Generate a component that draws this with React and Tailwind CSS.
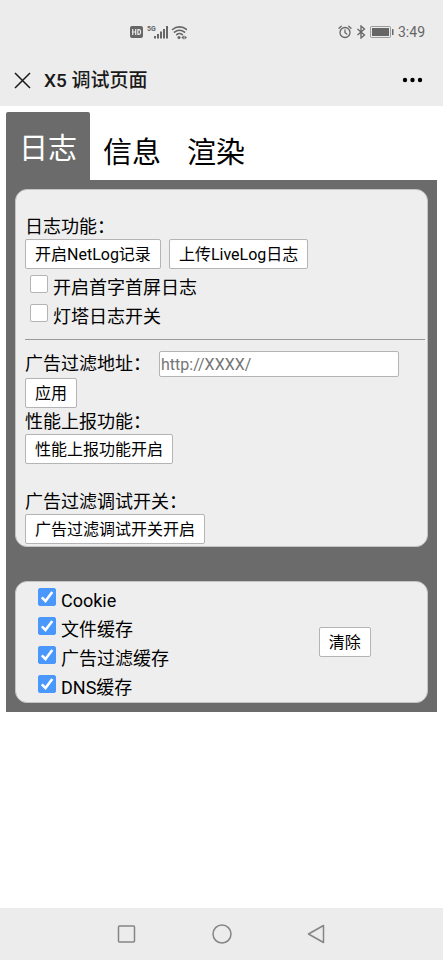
import React, { useState } from 'react';

const tabs = ['日志', '信息', '渲染'];

const logOptions = ['开启首字首屏日志', '灯塔日志开关'];

const cacheOptions = ['Cookie', '文件缓存', '广告过滤缓存', 'DNS缓存'];

const StatusBar = () => (
  <div className="flex items-center justify-between h-[54px] pt-[10px] pl-[129px] pr-[18px] text-[#666666]">
    <svg width="58" height="18" viewBox="0 0 58 18" fill="currentColor">
      <rect x="1" y="3" width="13" height="12" rx="2" />
      <path d="M3.7 6v6M6.7 6v6M3.7 9h3M8.9 6.6v4.8h1a1.6 1.6 0 0 0 1.6-1.6V8.2a1.6 1.6 0 0 0-1.6-1.6z" fill="none" stroke="#ececec" strokeWidth="1.2" />
      <text x="18" y="8" fontSize="7" fontWeight="700" fontFamily="Roboto, sans-serif">5G</text>
      <path d="M25 13h2v2.500h-2zM28 11h2v4.500h-2zM31 8.500h2v7h-2zM34 6h2v9.500h-2zM37 3h2v12.500h-2z" />
      <g fill="none" stroke="currentColor" strokeWidth="1.6" strokeLinecap="round">
        <path d="M43.500 6.500a10.500 10.500 0 0 1 14 0" />
        <path d="M45.500 9.200a7.500 7.500 0 0 1 10 0" />
        <path d="M47.700 11.700a4.300 4.300 0 0 1 5.600 0" />
      </g>
      <circle cx="50" cy="14.500" r="1.500" />
      <path d="M52.300 14.500l2.500-2v4zM58 14.500l-2.500-2v4z" />
    </svg>
    <div className="flex items-center gap-1">
      <svg width="14" height="14" viewBox="0 0 14 14" fill="none" stroke="currentColor" strokeWidth="1.3" strokeLinecap="round">
        <circle cx="7" cy="7.5" r="5" />
        <path d="M7 5v2.700l1.800 1.300M1 3.300l2.300-2M13 3.300l-2.300-2" />
      </svg>
      <svg width="10" height="14" viewBox="0 0 10 14" fill="none" stroke="currentColor" strokeWidth="1.3">
        <path d="M1.500 4l7 6L5 13V1l3.500 3-7 6" />
      </svg>
      <svg width="24" height="12" viewBox="0 0 24 12" fill="currentColor">
        <rect x="0.5" y="0.5" width="20" height="11" rx="1" fill="none" stroke="currentColor" strokeOpacity="0.6" />
        <rect x="2" y="2" width="17" height="8" />
        <rect x="22" y="3" width="1.5" height="6" rx="0.5" />
      </svg>
      <span className="text-sm leading-4">3:49</span>
    </div>
  </div>
);

const TitleBar = () => (
  <div className="flex items-center h-[52px] pl-[14px] pr-5 text-[#1a1a1a]">
    <button aria-label="关闭">
      <svg width="17" height="17" viewBox="0 0 17 17" fill="none" stroke="currentColor" strokeWidth="1.5">
        <path d="M1 1l15 15M16 1L1 16" />
      </svg>
    </button>
    <h1 className="ml-[13px] flex-1 pt-px text-[19px] leading-7 font-medium">X5 调试页面</h1>
    <button aria-label="更多">
      <svg width="22" height="6" viewBox="0 0 22 6" fill="#000">
        <circle cx="4" cy="3" r="2.2" />
        <circle cx="11.5" cy="3" r="2.2" />
        <circle cx="19" cy="3" r="2.2" />
      </svg>
    </button>
  </div>
);

const Button = ({ children }) => (
  <button className="block h-[30px] pt-[2px] px-[9px] bg-white border border-[#b4b4b4] rounded-[2px] text-base leading-[26px] whitespace-nowrap">
    {children}
  </button>
);

const Checkbox = ({ label, defaultChecked = false }) => {
  const [checked, setChecked] = useState(defaultChecked);

  return (
    <label className="flex items-start gap-[5px]">
      <span className="relative block w-[18px] h-[18px]">
        <input
          type="checkbox"
          checked={checked}
          onChange={(e) => setChecked(e.target.checked)}
          className="block appearance-none w-[18px] h-[18px] rounded-[2px] border border-[#b4b4b4] bg-white checked:border-[#4a98fb] checked:bg-[#4a98fb]"
        />
        {checked && (
          <svg className="absolute inset-0 pointer-events-none" width="18" height="18" viewBox="0 0 18 18" fill="none" stroke="#fff" strokeWidth="2.6">
            <path d="M3.800 9.300l3.700 3.700 6.800-9" />
          </svg>
        )}
      </span>
      <span className="pt-px text-lg leading-6">{label}</span>
    </label>
  );
};

const LogCard = () => (
  <section className="bg-[#eeeeee] border border-[#c4c4c4] rounded-xl pt-[23px] pb-[2px] pl-[9px] pr-[2px]">
    <p className="pt-[2px] leading-6">日志功能：</p>
    <div className="flex gap-2">
      <Button>开启NetLog记录</Button>
      <Button>上传LiveLog日志</Button>
    </div>
    <div className="flex flex-col gap-1 pt-[6px] pl-[5px]">
      {logOptions.map((label) => (
        <Checkbox key={label} label={label} />
      ))}
    </div>
    <hr className="mt-[10px] mb-[10px] border-[#9a9a9a]" />
    <div className="flex items-center h-7">
      <label htmlFor="filter-url" className="w-[134px] leading-6">广告过滤地址：</label>
      <input
        id="filter-url"
        type="text"
        placeholder="http://XXXX/"
        className="w-3/5 h-[26px] px-px bg-white border border-[#b4b4b4] rounded-[2px] text-base placeholder:text-[#757575]"
      />
    </div>
    <Button>应用</Button>
    <p className="pt-[2px] leading-6">性能上报功能：</p>
    <Button>性能上报功能开启</Button>
    <p className="mt-6 pt-[2px] leading-6">广告过滤调试开关：</p>
    <Button>广告过滤调试开关开启</Button>
  </section>
);

const CacheCard = () => (
  <section className="flex mt-[34px] bg-[#eeeeee] border border-[#c4c4c4] rounded-xl">
    <div className="w-3/5 flex flex-col gap-1 pt-[6px] pb-[2px] pl-[22px]">
      {cacheOptions.map((label) => (
        <Checkbox key={label} label={label} defaultChecked />
      ))}
    </div>
    <div className="flex-1 flex items-center justify-center">
      <Button>清除</Button>
    </div>
  </section>
);

const App = () => {
  const [active, setActive] = useState('日志');

  return (
    <div className="min-h-screen flex flex-col bg-white text-black text-lg font-['Roboto','Noto_Sans_CJK_SC',sans-serif]">
      <header className="bg-[#ececec]">
        <StatusBar />
        <TitleBar />
      </header>

      <main className="flex-1 p-[6px]">
        <nav className="flex">
          {tabs.map((tab) => (
            <button
              key={tab}
              onClick={() => setActive(tab)}
              className={`h-[68px] px-[13px] text-[29px] leading-10 rounded-t-[2px] ${
                active === tab ? 'pt-[6px] bg-[#6b6b6b] text-white' : 'pt-[14px]'
              }`}
            >
              {tab}
            </button>
          ))}
        </nav>
        <div className="bg-[#6b6b6b] p-[9px]">
          <LogCard />
          <CacheCard />
        </div>
      </main>

      <footer className="flex items-center justify-center gap-[75px] h-[52px] bg-[#ececec] text-[#858585]">
        <button aria-label="最近任务">
          <svg width="20" height="20" viewBox="0 0 20 20" fill="none" stroke="currentColor" strokeWidth="1.5">
            <rect x="1.5" y="2" width="16" height="16" rx="1" />
          </svg>
        </button>
        <button aria-label="主页">
          <svg width="20" height="20" viewBox="0 0 20 20" fill="none" stroke="currentColor" strokeWidth="1.5">
            <circle cx="10" cy="10" r="9" />
          </svg>
        </button>
        <button aria-label="返回">
          <svg width="20" height="20" viewBox="0 0 20 20" fill="none" stroke="currentColor" strokeWidth="1.5" strokeLinejoin="round">
            <path d="M16.500 1.500v17L1.500 10z" />
          </svg>
        </button>
      </footer>
    </div>
  );
};

export default App;
